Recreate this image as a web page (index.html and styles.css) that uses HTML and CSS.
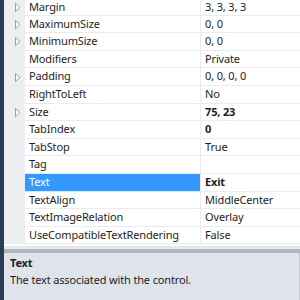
FILE: index.html
```html
<!DOCTYPE html>
<html lang="en">
<head>
  <meta charset="UTF-8">
  <title>Properties</title>
  <link rel="stylesheet" href="styles.css">
</head>
<body>
  <div class="frame">
    <div class="grid">
      <div class="row first"><span class="gutter"><svg class="arrow" width="6" height="9" viewBox="0 0 6 9"><polygon points="0.5,0.5 5,4.5 0.5,8.5"/></svg></span><span class="name">Margin</span><span class="value">3, 3, 3, 3</span></div>
      <div class="row"><span class="gutter"><svg class="arrow" width="6" height="9" viewBox="0 0 6 9"><polygon points="0.5,0.5 5,4.5 0.5,8.5"/></svg></span><span class="name">MaximumSize</span><span class="value">0, 0</span></div>
      <div class="row"><span class="gutter"><svg class="arrow" width="6" height="9" viewBox="0 0 6 9"><polygon points="0.5,0.5 5,4.5 0.5,8.5"/></svg></span><span class="name">MinimumSize</span><span class="value">0, 0</span></div>
      <div class="row"><span class="gutter"></span><span class="name">Modifiers</span><span class="value">Private</span></div>
      <div class="row"><span class="gutter"><svg class="arrow" width="6" height="9" viewBox="0 0 6 9"><polygon points="0.5,0.5 5,4.5 0.5,8.5"/></svg></span><span class="name">Padding</span><span class="value">0, 0, 0, 0</span></div>
      <div class="row"><span class="gutter"></span><span class="name">RightToLeft</span><span class="value">No</span></div>
      <div class="row"><span class="gutter"><svg class="arrow" width="6" height="9" viewBox="0 0 6 9"><polygon points="0.5,0.5 5,4.5 0.5,8.5"/></svg></span><span class="name">Size</span><span class="value bold">75, 23</span></div>
      <div class="row"><span class="gutter"></span><span class="name">TabIndex</span><span class="value bold">0</span></div>
      <div class="row"><span class="gutter"></span><span class="name">TabStop</span><span class="value">True</span></div>
      <div class="row"><span class="gutter"></span><span class="name">Tag</span><span class="value"></span></div>
      <div class="row selected"><span class="gutter"></span><span class="name">Text</span><span class="value bold">Exit</span></div>
      <div class="row"><span class="gutter"></span><span class="name">TextAlign</span><span class="value">MiddleCenter</span></div>
      <div class="row"><span class="gutter"></span><span class="name">TextImageRelation</span><span class="value">Overlay</span></div>
      <div class="row"><span class="gutter"></span><span class="name">UseCompatibleTextRendering</span><span class="value">False</span></div>
    </div>
    <div class="splitter"></div>
    <div class="desc">
      <div class="desc-title">Text</div>
      <div class="desc-text">The text associated with the control.</div>
    </div>
  </div>
</body>
</html>
```

FILE: styles.css
```css
body {
  margin: 0;
  width: 300px;
  height: 300px;
  overflow: hidden;
  background: #2b3c59;
  font-family: "Noto Sans", "Open Sans", sans-serif;
  font-size: 11px;
  letter-spacing: -0.15px;
  color: #1e1e1e;
}
.frame {
  margin-left: 4px;
  height: 300px;
  display: flex;
  flex-direction: column;
  background: #fff;
}
.grid {
  height: 246px;
  overflow: hidden;
  background: #fff;
}
.row {
  display: grid;
  grid-template-columns: 21px 175px 1fr;
  height: 17.6px;
}
.row.first {
  height: 15.6px;
}
.gutter {
  background: #eceef2;
  display: flex;
  align-items: center;
  padding-left: 11px;
}
.arrow polygon {
  fill: #fff;
  stroke: #a0a0a0;
  stroke-width: 1;
}
.name,
.value {
  box-sizing: border-box;
  border-bottom: 1px solid #ececec;
  padding-left: 4px;
  line-height: 16.6px;
  white-space: nowrap;
  overflow: hidden;
}
.first .name,
.first .value {
  line-height: 14.6px;
}
.value {
  border-left: 1px solid #ececec;
}
.bold {
  font-weight: bold;
}
.selected .name {
  background: #3399ff;
  color: #fff;
  border-bottom-color: #cfe6ff;
}
.splitter {
  height: 7px;
  background: #e6e9ee;
  border-top: 1px solid #e4e4e4;
  border-bottom: 4px solid #b1b5bd;
  box-sizing: border-box;
}
.desc {
  flex: 1;
  background: #dfe3ea;
  border-right: 1px solid #c3c7cf;
  padding: 1px 6px 0;
}
.desc-title {
  font-weight: bold;
  line-height: 17px;
}
.desc-text {
  line-height: 17px;
}
```
